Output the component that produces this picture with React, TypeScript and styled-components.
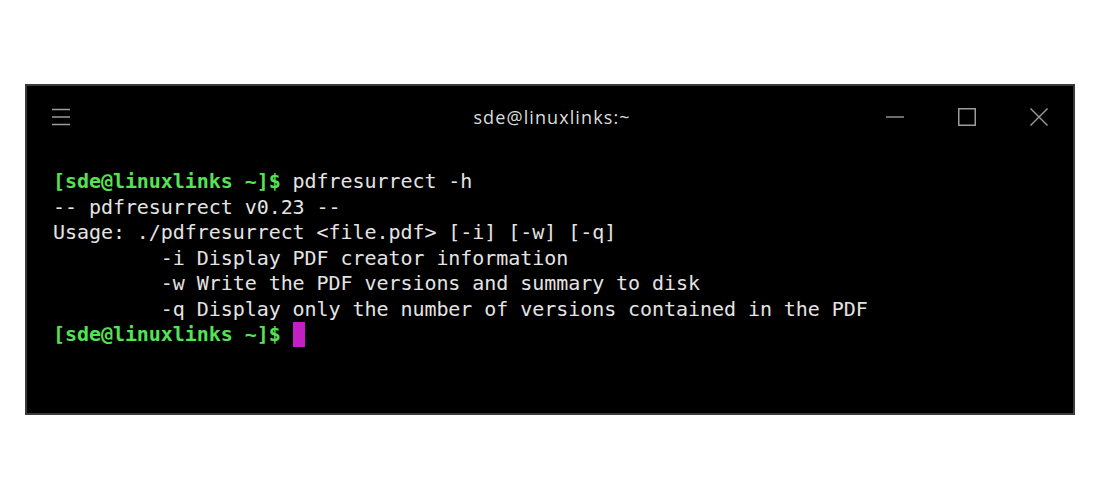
import React from "react";
import styled, { createGlobalStyle } from "styled-components";

const Global = createGlobalStyle`
  html, body { margin: 0; padding: 0; background: #ffffff; }
  body { width: 1100px; height: 500px; overflow: hidden; }
`;

const Page = styled.div`
  padding: 84px 0 0 25px;
`;

const Window = styled.div`
  width: 1050px;
  height: 331px;
  box-sizing: border-box;
  border: 2px solid #3a3a3a;
  background: #000000;
  display: flex;
  flex-direction: column;
`;

const TitleBar = styled.div`
  height: 62px;
  display: grid;
  grid-template-columns: 1fr auto 1fr;
  align-items: center;
  padding: 0 25px;
`;

const Title = styled.div`
  font-family: "Open Sans", "Noto Sans", sans-serif;
  font-size: 18px;
  color: #dcdcdc;
  letter-spacing: 1.1px;
  padding-left: 4px;
`;

const LeftGroup = styled.div`
  display: flex;
  align-items: center;
`;

const RightGroup = styled.div`
  display: flex;
  align-items: center;
  justify-content: flex-end;
  gap: 54px;
`;

const IconButton = styled.div`
  width: 18px;
  height: 18px;
  display: flex;
  align-items: center;
  justify-content: center;
  svg { display: block; }
`;

const Body = styled.div`
  padding: 21px 0 0 26px;
  font-family: "DejaVu Sans Mono", "Liberation Mono", monospace;
  font-size: 20px;
  letter-spacing: -0.06px;
  line-height: 25.5px;
  color: #e4e4e4;
  white-space: pre;
`;

const Line = styled.div`
  height: 25.5px;
`;

const Prompt = styled.span`
  color: #55e255;
  font-weight: bold;
`;

const Cursor = styled.span`
  display: inline-block;
  width: 12px;
  height: 25px;
  vertical-align: -6px;
  background: #c41fc4;
`;

const stroke = "#9c9c9c";

const App: React.FC = () => (
  <>
    <Global />
    <Page>
      <Window>
        <TitleBar>
          <LeftGroup>
            <IconButton>
              <svg width="18" height="18" viewBox="0 0 18 18">
                <path d="M0 1.5H18M0 9H18M0 16.5H18" stroke={stroke} strokeWidth="1.4" />
              </svg>
            </IconButton>
          </LeftGroup>
          <Title>sde@linuxlinks:~</Title>
          <RightGroup>
            <IconButton>
              <svg width="18" height="18" viewBox="0 0 18 18">
                <path d="M0 9H18" stroke={stroke} strokeWidth="1.4" />
              </svg>
            </IconButton>
            <IconButton>
              <svg width="18" height="18" viewBox="0 0 18 18">
                <rect x="0.75" y="0.75" width="16.5" height="16.5" fill="none" stroke={stroke} strokeWidth="1.5" />
              </svg>
            </IconButton>
            <IconButton>
              <svg width="18" height="18" viewBox="0 0 18 18">
                <path d="M0.5 0.5L17.5 17.5M17.5 0.5L0.5 17.5" stroke={stroke} strokeWidth="1.4" />
              </svg>
            </IconButton>
          </RightGroup>
        </TitleBar>
        <Body>
          <Line><Prompt>[sde@linuxlinks ~]$</Prompt>{" pdfresurrect -h"}</Line>
          <Line>-- pdfresurrect v0.23 --</Line>
          <Line>Usage: ./pdfresurrect &lt;file.pdf&gt; [-i] [-w] [-q]</Line>
          <Line>{"         -i Display PDF creator information"}</Line>
          <Line>{"         -w Write the PDF versions and summary to disk"}</Line>
          <Line>{"         -q Display only the number of versions contained in the PDF"}</Line>
          <Line><Prompt>[sde@linuxlinks ~]$</Prompt>{" "}<Cursor /></Line>
        </Body>
      </Window>
    </Page>
  </>
);

export default App;
